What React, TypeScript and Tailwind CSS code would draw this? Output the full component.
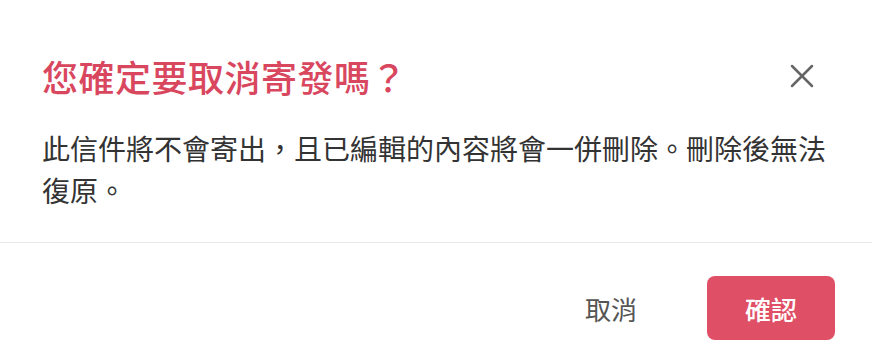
import { X } from 'lucide-react';

export default function App() {
  return (
    <div
      className="w-[872px] h-[360px] bg-white flex flex-col overflow-hidden"
      style={{ fontFamily: '"Noto Sans CJK TC", "Noto Sans", sans-serif' }}
    >
      <div className="pt-[54px] pl-[42px] pr-[40px] pb-[31px]">
        <div className="flex items-center justify-between">
          <h2 className="text-[36px] leading-[44px] tracking-[0.5px] font-medium text-[#d9475f]">您確定要取消寄發嗎？</h2>
          <button className="w-[40px] h-[40px] flex items-center justify-center text-[#666] mr-[10px]">
            <X size={40} strokeWidth={1.5} />
          </button>
        </div>
        <p className="mt-[29px] text-[28px] leading-[42px] text-[#333]">
          此信件將不會寄出，且已編輯的內容將會一併刪除。刪除後無法復原。
        </p>
      </div>
      <div className="border-t border-[#e8e8e8]" />
      <div className="flex items-center justify-end gap-[70px] pt-[33px] pr-[37px]">
        <button className="text-[26px] text-[#555]">取消</button>
        <button className="w-[128px] h-[64px] rounded-[8px] bg-[#df4f66] text-white text-[26px] font-medium">
          確認
        </button>
      </div>
    </div>
  );
}
